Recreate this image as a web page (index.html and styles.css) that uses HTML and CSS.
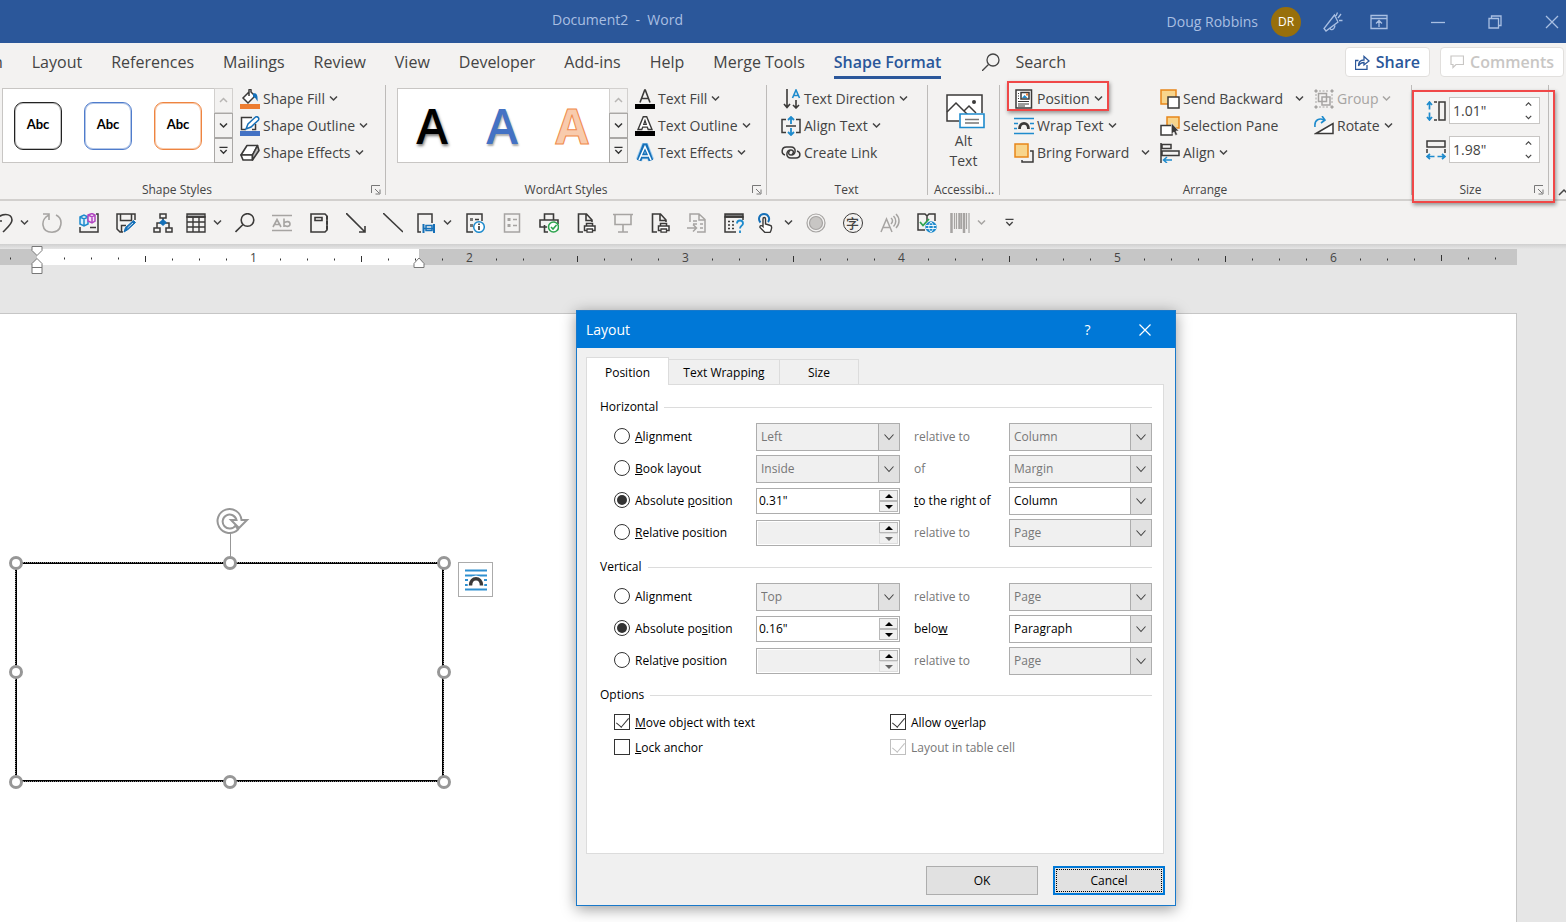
FILE: index.html
```html
<!DOCTYPE html>
<html lang="en">
<head>
<meta charset="utf-8">
<meta name="viewport" content="width=device-width, initial-scale=1">
<title>Document2 - Word</title>
<link rel="stylesheet" href="styles.css">
</head>
<body>
<svg class="sprite" aria-hidden="true">
  <symbol id="chev" viewBox="0 0 9 9"><path d="M1 2.500 4.500 6 8 2.500" fill="none" stroke="currentColor" stroke-width="1.500"/></symbol>
  <symbol id="chev-up" viewBox="0 0 9 9"><path d="M1 6 4.500 2.500 8 6" fill="none" stroke="currentColor" stroke-width="1.500"/></symbol>
  <symbol id="chev-thin" viewBox="0 0 10 10"><path d="M.5 2.500 5 7.500 9.500 2.500" fill="none" stroke="currentColor" stroke-width="1.100"/></symbol>
  <symbol id="chev-bar" viewBox="0 0 10 10"><path d="M.5 1.500h9M1.500 4.500 5 8l3.500-3.500" fill="none" stroke="currentColor" stroke-width="1.500"/></symbol>
  <symbol id="launch" viewBox="0 0 10 10"><path d="M.5 8V.500H9M4 4l4 4M9 4.500V9H4.500" fill="none" stroke="#777"/></symbol>
  <symbol id="ticks" viewBox="0 0 216 16"><path d="M.5 6v6M27.500 8.500v2M54.500 8.500v2M81.500 8.500v2M135.500 8.500v2M162.500 8.500v2M189.500 8.500v2" stroke="#333" fill="none"/></symbol>
  <symbol id="printer" viewBox="0 0 20 20"><path d="M16 9V7L10.500 1H2.500v18H7M10 1v6.500h6" fill="none" stroke="#3b3a39" stroke-width="1.600"/><path d="M10.500 13v-2.500h6V13M8.500 17.500V13h10.500v4.500z" fill="#fff" stroke="#3b3a39" stroke-width="1.500"/><path d="M11 16h5.500v3.200H11z" fill="#fff" stroke="#3b3a39" stroke-width="1.300"/></symbol>
</svg>

<header class="titlebar">
  <h1 class="doc-title">Document2 &nbsp;-&nbsp; Word</h1>
  <div class="account">
    <span class="user">Doug Robbins</span>
    <span class="avatar">DR</span>
  </div>
  <div class="window-tools">
    <button class="win-btn" aria-label="Announcements"><svg width="20" height="20" viewBox="0 0 20 20" fill="none" stroke="currentColor" stroke-width="1.300"><path d="M11.500 3 1 16.500l2 2.500L15 10zM7 15.500c0 3 4 3.500 5-2M11.500 3 15 10M13 4l1.500-3.500M15 6l3-4M16 8.500h3.500"/></svg></button>
    <button class="win-btn" aria-label="Ribbon display"><svg width="18" height="16" viewBox="0 0 18 16" fill="none" stroke="currentColor" stroke-width="1.300"><path d="M1 1.500h16v13H1zM1 4.500h16M9 13V7M6 9.500l3-3 3 3"/></svg></button>
    <button class="win-btn" aria-label="Minimize"><svg width="14" height="14" viewBox="0 0 14 14" stroke="currentColor" stroke-width="1.300"><path d="M0 7.500h14"/></svg></button>
    <button class="win-btn" aria-label="Restore"><svg width="14" height="14" viewBox="0 0 14 14" fill="none" stroke="currentColor" stroke-width="1.300"><path d="M1 3.500h9.500V13H1zM3.500 3.500V1H13v9.500h-2.500"/></svg></button>
    <button class="win-btn" aria-label="Close"><svg width="14" height="14" viewBox="0 0 14 14" stroke="currentColor" stroke-width="1.300"><path d="m1 1 12 12M13 1 1 13"/></svg></button>
  </div>
</header>

<div class="tabs-row">
  <nav class="tabs" aria-label="Ribbon tabs">
    <a href="#">Design</a><a href="#">Layout</a><a href="#">References</a><a href="#">Mailings</a><a href="#">Review</a><a href="#">View</a><a href="#">Developer</a><a href="#">Add-ins</a><a href="#">Help</a><a href="#">Merge Tools</a><a href="#" class="current" aria-current="page">Shape Format</a>
  </nav>
  <button class="search"><svg width="18" height="18" viewBox="0 0 18 18" fill="none" stroke="#444" stroke-width="1.300"><circle cx="11" cy="7" r="6"/><path d="M6.500 11.500 0 18"/></svg>Search</button>
  <div class="share-tools">
    <button class="pill share"><svg width="15" height="15" viewBox="0 0 15 15" fill="none" stroke="currentColor" stroke-width="1.300"><path d="M3.500 5.500h-3v9h11.500V10M3.500 11c0-4 2-6 5.500-6V1.500L14 6 9 10V7.500c-2.500 0-4 .5-5.500 3.500z"/></svg>Share</button>
    <button class="pill comments"><svg width="14" height="14" viewBox="0 0 14 14" fill="none" stroke="currentColor" stroke-width="1.200"><path d="M1 1h12.500v8.500H6L3 12.500v-3H1z"/></svg>Comments</button>
  </div>
</div>

<main class="ribbon">
  <section class="group shape-styles">
    <div class="group-body">
      <div class="gallery">
        <div class="gallery-items">
          <button class="swatch black">Abc</button><button class="swatch blue">Abc</button><button class="swatch orange">Abc</button>
        </div>
        <div class="gallery-nav">
          <button disabled aria-label="Previous"><svg class="chev"><use href="#chev-up"/></svg></button>
          <button aria-label="Next"><svg class="chev"><use href="#chev"/></svg></button>
          <button aria-label="More"><svg class="chev"><use href="#chev-bar"/></svg></button>
        </div>
      </div>
      <div class="commands">
        <button class="cmd"><svg class="ico" viewBox="0 0 20 20"><path d="M0 15h20v5H0z" fill="#ed7d31"/><path d="m9 3-6 6 5 5 7-7-4-4V1c0-1-2-1-2 0v6" fill="#fff" stroke="#3b3a39" stroke-width="1.500"/><path d="M13 4.500c4-1 5 2 4.500 8-1-1-1-4-4.500-4.500z" fill="#1570b8"/></svg>Shape Fill<svg class="chev"><use href="#chev"/></svg></button>
        <button class="cmd"><svg class="ico" viewBox="0 0 20 20"><path d="M0 15h20v5H0z" fill="#4472c4"/><path d="M12 1.500H1.500v12H6M15.500 8v5.500H12" fill="#fff" stroke="#3b3a39" stroke-width="1.500"/><path d="m6 13 2-5 7.500-7c2-1 4 1 3 3L11 11z" fill="#fff" stroke="#1570b8" stroke-width="1.500"/></svg>Shape Outline<svg class="chev"><use href="#chev"/></svg></button>
        <button class="cmd"><svg class="ico" viewBox="0 0 20 20" stroke="#3b3a39" stroke-width="1.600" stroke-linejoin="round"><path d="M7 2.500h10.500L12.500 12H1z" fill="#fff"/><path d="M1 12h11.500v5H3z" fill="#fff"/><path d="m17.500 2.500 1.500 5-6.500 9.500v-5z" fill="#bbb"/></svg>Shape Effects<svg class="chev"><use href="#chev"/></svg></button>
      </div>
    </div>
    <footer class="group-label">Shape Styles<button class="launcher" aria-label="Format shape"><svg width="10" height="10"><use href="#launch"/></svg></button></footer>
  </section>

  <section class="group wordart">
    <div class="group-body">
      <div class="gallery">
        <div class="gallery-items">
          <button class="letter l-black">A</button><button class="letter l-blue">A</button><button class="letter l-orange">A</button>
        </div>
        <div class="gallery-nav">
          <button disabled aria-label="Previous"><svg class="chev"><use href="#chev-up"/></svg></button>
          <button aria-label="Next"><svg class="chev"><use href="#chev"/></svg></button>
          <button aria-label="More"><svg class="chev"><use href="#chev-bar"/></svg></button>
        </div>
      </div>
      <div class="commands">
        <button class="cmd"><svg class="ico" viewBox="0 0 20 20"><path d="M0 15h20v5H0z" fill="#000"/><path d="M5 13.500 9.700 1h.6L15 13.500M6.700 9.500h6.600" fill="none" stroke="#3b3a39" stroke-width="1.600"/></svg>Text Fill<svg class="chev"><use href="#chev"/></svg></button>
        <button class="cmd"><svg class="ico" viewBox="0 0 20 20"><path d="M0 15h20v5H0z" fill="#000"/><path d="M8.300.8h3.400L17 13.500h-3.800l-.9-2.400H7.700l-.9 2.400H3z" fill="#fff" stroke="#3b3a39" stroke-width="1.400"/><path d="m10 4.500 1.300 4H8.700z" fill="#f3f2f1" stroke="#3b3a39" stroke-width="1.200"/></svg>Text Outline<svg class="chev"><use href="#chev"/></svg></button>
        <button class="cmd"><svg class="ico" viewBox="0 0 20 20" fill="none"><path d="M4 17 9.500 3h1L16 17M6.500 13h7" stroke="#9fcdf0" stroke-width="6.500"/><path d="M4 17.500 9.500 3h1L16 17.500M6.500 13h7" stroke="#1570b8" stroke-width="4.800"/><path d="M4 17 10 3.500 16 17M6.500 13h7" stroke="#fff" stroke-width="1.500"/></svg>Text Effects<svg class="chev"><use href="#chev"/></svg></button>
      </div>
    </div>
    <footer class="group-label">WordArt Styles<button class="launcher" aria-label="Format text effects"><svg width="10" height="10"><use href="#launch"/></svg></button></footer>
  </section>

  <section class="group text-group">
    <div class="group-body">
      <div class="commands">
        <button class="cmd"><svg class="ico" viewBox="0 0 20 20" fill="none" stroke="#3b3a39" stroke-width="1.600"><path d="M6 0v18M3 15l3 3.500L9 15M15 11v8M12 16l3 3 3-3"/><path d="m11.500 9 3.500-8 3.500 8M12.500 6.500h5" stroke="#1e8bcd"/></svg>Text Direction<svg class="chev"><use href="#chev"/></svg></button>
        <button class="cmd"><svg class="ico" viewBox="0 0 20 20" fill="none" stroke="#3b3a39" stroke-width="1.500"><path d="M5 3.500H1v13h4M15 3.500h4v13h-4M5 10h10"/><path d="M10 1v7M7 4l3-3 3 3M10 12v7M7 16l3 3 3-3" stroke="#1e8bcd" stroke-width="1.800"/></svg>Align Text<svg class="chev"><use href="#chev"/></svg></button>
        <button class="cmd"><svg class="ico" viewBox="0 0 20 20" fill="none" stroke="#3b3a39" stroke-width="1.500"><path d="M4 12c-4-1-4-8 1.500-8H10c6 0 5 8 0 8-3 0-3-3-1-4.500"/><path d="M16 8c4 1 4 7-1 7h-5c-6 0-5-8 0-8 3 0 3 3.500 1 4.500"/></svg>Create Link</button>
      </div>
    </div>
    <footer class="group-label">Text</footer>
  </section>

  <section class="group access">
    <div class="group-body">
      <button class="big"><svg width="39" height="35" viewBox="0 0 39 35" fill="none" stroke="#3b3a39" stroke-width="1.500"><path d="M13 27H1V1h35v18" fill="#fff"/><path d="M1 18 10 9l12 12M18 17l5-5 7 7"/><circle cx="28" cy="8" r="2" fill="#3b3a39" stroke="none"/><path d="M14 20h24v13.500H14z" fill="#fff" stroke="#1e8bcd" stroke-width="1.600"/><path d="M19 25.500h14M19 29h14" stroke="#777"/></svg><span>Alt<br>Text</span></button>
    </div>
    <footer class="group-label">Accessibi...</footer>
  </section>

  <section class="group arrange">
    <div class="group-body">
      <div class="commands col-a">
        <button class="cmd marked"><svg class="ico" viewBox="0 0 20 20" fill="none" stroke="#3b3a39" stroke-width="1.500"><path d="M2 1h15.500v18H2z" fill="#fff"/><path d="M7 3.500h8v6.500H7z"/><path d="m8 9 2.500-3 3 3z" fill="#1e8bcd" stroke="none"/><path d="M12 4.500h2v2h-2z" fill="#ed7d31" stroke="none"/><path d="M4 4.500h1M4 7h1M4 9.500h1M4 12.500h11M4 15h11M4 17h7" stroke-width="1"/></svg>Position<svg class="chev"><use href="#chev"/></svg></button>
        <button class="cmd"><svg class="ico" viewBox="0 0 20 20" fill="none" stroke="#1e8bcd" stroke-width="1.600"><path d="M0 2.500h20M0 7.500h4M16 7.500h4M0 12.500h3M17 12.500h3M0 17.500h20"/><path d="M5.500 13c0-7.500 9-7.500 9 0" stroke="#3b3a39" stroke-width="2.800"/></svg>Wrap Text<svg class="chev"><use href="#chev"/></svg></button>
        <button class="cmd spread"><svg class="ico" viewBox="0 0 20 20" stroke-width="1.500"><path d="M8 17v2h11V8h-3" fill="none" stroke="#3b3a39"/><path d="M1 1h13v13H1z" fill="#f8d58c" stroke="#e8861a"/></svg>Bring Forward<svg class="chev"><use href="#chev"/></svg></button>
      </div>
      <div class="commands col-b">
        <button class="cmd spread"><svg class="ico" viewBox="0 0 20 20" stroke-width="1.500"><path d="M1 1h15v14H1z" fill="#f8d58c" stroke="#e8861a"/><path d="M8 8h11v11H8z" fill="#fff" stroke="#3b3a39"/></svg>Send Backward<svg class="chev"><use href="#chev"/></svg></button>
        <button class="cmd"><svg class="ico" viewBox="0 0 20 20" stroke-width="1.500"><path d="M7 1h12v11H7z" fill="#f8d58c" stroke="#e8861a"/><path d="M1 9.500h11V19H1z" fill="#fff" stroke="#3b3a39"/><path d="M11.500 7v11l2.500-2 1.500 3.500 2-1-1.500-3.500h3z" fill="#3b3a39" stroke="#f3f2f1" stroke-width=".6"/></svg>Selection Pane</button>
        <button class="cmd"><svg class="ico" viewBox="0 0 20 20" fill="none" stroke="#3b3a39" stroke-width="1.500"><path d="M1 0v20M2 1.500h9v4H2zM2 8h17v4.500H2z"/><path d="M12 17H4M7 14l-3.500 3L7 20" stroke="#1e8bcd"/></svg>Align<svg class="chev"><use href="#chev"/></svg></button>
      </div>
      <div class="commands col-c">
        <button class="cmd" disabled><svg class="ico" viewBox="0 0 20 20" fill="none" stroke="#a6a4a2" stroke-width="1.500"><path d="M4.500 4.500h8v8h-8zM8 8h8v8H8z"/><path d="M2 5v10M5 2h10M18 5v10M5 18h10" stroke-dasharray="2 1.500" stroke-width="1"/><path d="M1 1h2v2H1zM17 1h2v2h-2zM1 17h2v2H1zM17 17h2v2h-2z" fill="#a6a4a2" stroke-width="1"/></svg>Group<svg class="chev"><use href="#chev"/></svg></button>
        <button class="cmd"><svg class="ico" viewBox="0 0 20 20" fill="none" stroke="#3b3a39" stroke-width="1.500"><path d="M2 17.500 19 7.500v10z" fill="#fff"/><path d="M1 11C0 3 6 2 10 4M8 0l3 4-4 3" stroke="#1e8bcd" stroke-width="1.600"/></svg>Rotate<svg class="chev"><use href="#chev"/></svg></button>
      </div>
    </div>
    <footer class="group-label">Arrange</footer>
  </section>

  <section class="group size marked-size">
    <div class="group-body">
      <label class="dim"><svg class="ico" viewBox="0 0 20 20" fill="none" stroke="#3b3a39" stroke-width="1.500"><path d="M13 1h6v18h-6zM8 1h3M8 19h3"/><path d="M3.500 1.500v7M1 4l2.500-3L6 4M3.500 11.500v7M1 16l2.500 3L6 16" stroke="#1e8bcd" stroke-width="1.700"/></svg><span class="dim-box"><input type="text" value='1.01"' aria-label="Shape height"><span class="dim-arrows"><svg class="chev"><use href="#chev-up"/></svg><svg class="chev"><use href="#chev"/></svg></span></span></label>
      <label class="dim"><svg class="ico" viewBox="0 0 20 20" fill="none" stroke="#3b3a39" stroke-width="1.500"><path d="M1 1h18v6H1zM1 9v4M19 9v4"/><path d="M1.500 16.500h7M4 14l-3 2.500L4 19M11.500 16.500h7M16 14l3 2.500-3 2.500" stroke="#1e8bcd" stroke-width="1.700"/></svg><span class="dim-box"><input type="text" value='1.98"' aria-label="Shape width"><span class="dim-arrows"><svg class="chev"><use href="#chev-up"/></svg><svg class="chev"><use href="#chev"/></svg></span></span></label>
    </div>
    <footer class="group-label">Size<button class="launcher" aria-label="Size settings"><svg width="10" height="10"><use href="#launch"/></svg></button></footer>
  </section>
  <button class="collapse" aria-label="Collapse ribbon"><svg width="12" height="8" viewBox="0 0 12 8"><path d="m1 7 5-5 5 5" fill="none" stroke="#444" stroke-width="1.500"/></svg></button>
</main>

<div class="qat" role="toolbar" aria-label="Quick access">
  <button class="q split" aria-label="Undo"><svg class="ico" viewBox="0 0 20 20" fill="none" stroke="#3b3a39" stroke-width="1.600"><path d="M2 1v7h7M2 8c6-9 17-8 17-1 0 4-5 8-9 12"/></svg><svg class="chev"><use href="#chev"/></svg></button>
  <button class="q" aria-label="Redo"><svg class="ico" viewBox="0 0 20 20" fill="none" stroke="#a6a4a2" stroke-width="1.600"><path d="M1 1h6v6M7 2C-2 6-1 19 10 19.200 20 19 22 6 14 2"/></svg></button>
  <button class="q" aria-label="3D models"><svg class="ico" viewBox="0 0 20 20" fill="none" stroke="#3b3a39" stroke-width="1.500"><path d="M1 14v5h18V1h-2M11 14.500h6" /><path d="m1 4 4-2 4 2v7l-4 2-4-2zM1 4l4 2 4-2M5 6v7" fill="#dff0fb" stroke="#1e8bcd"/><path d="m9 2 4-1.500L16 2v6l-3 2-4-2zM9 2l4 2 3-2M13 4v6" fill="#f6e3f7" stroke="#b146c2"/></svg></button>
  <button class="q" aria-label="Save as"><svg class="ico" viewBox="0 0 20 20" fill="none" stroke="#3b3a39" stroke-width="1.500"><path d="M19 7V1H1v15l3 3h3M4.500 1v6.500h11V1M5.500 19v-6.500H10"/><path d="m8 19 1.500-4.500 8-7 2 2-7.500 7z" fill="#1570b8" stroke="#1570b8" stroke-width="1"/><path d="m11.500 15 5.500-5" stroke="#fff" stroke-width=".8"/></svg></button>
  <button class="q" aria-label="Organization chart"><svg class="ico" viewBox="0 0 20 20" fill="none" stroke="#3b3a39" stroke-width="1.500"><path d="M7 1h6v4H7zM1 15h6v4H1zM13 15h6v4h-6zM10 5v4M4 15v-5h12v5"/><path d="m10 6 4 3.500-4 3.500-4-3.500z" fill="#1570b8" stroke="none"/></svg></button>
  <button class="q split" aria-label="Table"><svg class="ico" viewBox="0 0 20 20" fill="none" stroke="#3b3a39" stroke-width="1.400"><path d="M1 1h18v3H1z" fill="#aaa"/><path d="M1 4h18v15H1zM1 9h18M1 14h18M7 4v15M13 4v15"/></svg><svg class="chev"><use href="#chev"/></svg></button>
  <button class="q" aria-label="Find"><svg class="ico" viewBox="0 0 20 20" fill="none" stroke="#3b3a39" stroke-width="1.600"><circle cx="12.500" cy="7" r="6.300"/><path d="M8 11.500.5 19"/></svg></button>
  <button class="q" aria-label="Strikethrough"><svg class="ico" viewBox="0 0 20 20" fill="none" stroke="#a6a4a2" stroke-width="1.600"><path d="M0 2.500h20M0 17.500h20M1 14l4-7.500 4 7.500M2.500 11.500h5M12 5.500V14M12 10c2-2 6-2 6 1s-4 3-6 1"/></svg></button>
  <button class="q" aria-label="Notebook"><svg class="ico" viewBox="0 0 20 20" fill="none" stroke="#3b3a39" stroke-width="1.600"><path d="M2 1h14l2 2v14l-2 2H2zM6 4.500h7v3H6z"/><path d="M18 3v14" stroke-width="2" stroke-dasharray="3.500 1.500"/></svg></button>
  <button class="q" aria-label="Arrow"><svg class="ico" viewBox="0 0 20 20" fill="none" stroke="#3b3a39" stroke-width="1.600"><path d="m0 0 19 19M19 13v6h-6"/></svg></button>
  <button class="q" aria-label="Line"><svg class="ico" viewBox="0 0 20 20" stroke="#3b3a39" stroke-width="1.600"><path d="m0 0 20 19"/></svg></button>
  <button class="q split" aria-label="Page width"><svg class="ico" viewBox="0 0 20 20" fill="none" stroke="#3b3a39" stroke-width="1.500"><path d="M5 19H2V1h14v9"/><path d="M7.500 11v9M18 11v9" stroke="#1570b8" stroke-width="2"/><path d="M8 15.500h10M10 12.500h6v5h-6z" stroke="#1570b8"/></svg><svg class="chev"><use href="#chev"/></svg></button>
  <button class="q" aria-label="Document info"><svg class="ico" viewBox="0 0 20 20" fill="none" stroke="#3b3a39" stroke-width="1.500"><path d="M8 19H2V1h15v7"/><path d="M5 5h3v3H5zM5 11h3v3H5z" fill="#777" stroke="none"/><path d="M10 6.500h4"/><circle cx="14" cy="14" r="5.300" fill="#fff" stroke="#1e8bcd"/><path d="M14 13v4M14 10.500V12" stroke-width="1.700"/></svg></button>
  <button class="q" aria-label="Properties" disabled><svg class="ico" viewBox="0 0 20 20" fill="none" stroke="#a6a4a2" stroke-width="1.500"><path d="M2.500 1h15v18h-15z"/><path d="M5.500 5h3v3h-3zM5.500 11h3v3h-3z" fill="#a6a4a2" stroke="none"/><path d="M11 6.500h4M11 12.500h4"/></svg></button>
  <button class="q" aria-label="Quick print"><svg class="ico" viewBox="0 0 20 20" fill="none" stroke="#3b3a39" stroke-width="1.600"><path d="M5.500 7V1h9v6M8 14H1V7h18v4M5.500 12v7H9M15 9.500h1"/><circle cx="14.500" cy="14" r="5" fill="#fff" stroke="#2ea44f"/><path d="m12 14 2 2 3.500-4" stroke="#2ea44f"/></svg></button>
  <button class="q" aria-label="Print document"><svg class="ico"><use href="#printer"/></svg></button>
  <button class="q" aria-label="Presentation" disabled><svg class="ico" viewBox="0 0 20 20" fill="none" stroke="#a6a4a2" stroke-width="1.600"><path d="M0 1.500h20M2 2v9.500h16V2M10 12v7M5 19h10"/></svg></button>
  <button class="q" aria-label="Print preview"><svg class="ico"><use href="#printer"/></svg></button>
  <button class="q" aria-label="Insert file" disabled><svg class="ico" viewBox="0 0 20 20" fill="none" stroke="#a6a4a2" stroke-width="1.500"><path d="M3 9V1h9l6 5.500V19h-8M12 1v6h6M6 8h4M6 11h4M13 11h3M13 15h3M0 15h9M6 11.500 9.500 15 6 18.500"/></svg></button>
  <button class="q" aria-label="Field help"><svg class="ico" viewBox="0 0 20 20" fill="none" stroke="#3b3a39" stroke-width="1.500"><path d="M1 1h18v3H1z" fill="#777"/><path d="M12 19H1V4h18v3M4 8.500h2M8 8.500h2M4 12h2M8 12h2M4 15.500h2M8 15.500h2"/><path d="M13 10.500c0-4 6-4 6 0 0 2-3 2.500-3 5M16 17.500V20" stroke="#1e8bcd" stroke-width="1.800"/></svg></button>
  <button class="q split" aria-label="Touch mode"><svg class="ico" viewBox="0 0 20 20" fill="none" stroke="#3b3a39" stroke-width="1.400"><path d="M3.500 9.500C.5 6 2.500 1 7 1c4.500 0 6.500 5 4 8" stroke="#1570b8" stroke-width="2"/><path d="M6 13.500V6c0-2 2.500-2 2.500 0v5l5 1.500c2 .5 1 4.500-.5 7H8l-5-5c-.5-2 1.500-2.500 3-1z" fill="#fff"/></svg><svg class="chev"><use href="#chev"/></svg></button>
  <button class="q" aria-label="Record" disabled><svg class="ico" viewBox="0 0 20 20" fill="none" stroke="#a6a4a2" stroke-width="1.200"><circle cx="10" cy="10" r="9"/><circle cx="10" cy="10" r="6.500" fill="#c8c6c4"/></svg></button>
  <button class="q" aria-label="Enclose characters"><span class="enclosed">字</span></button>
  <button class="q" aria-label="Read aloud" disabled><svg class="ico" viewBox="0 0 20 20" fill="none" stroke="#a6a4a2" stroke-width="1.500"><path d="M1 19 6.500 6 12 19M3 14.500h7M11 5c2 1.500 2 4 0 6M13.500 3c3 3 3 7.500 0 10.500M16 1c4 4 4 10 0 14"/></svg></button>
  <button class="q" aria-label="Proofing language"><svg class="ico" viewBox="0 0 20 20" fill="none" stroke="#3b3a39" stroke-width="1.500"><path d="M8 17H1V1h7l2 2 2-2h6v7M10 3v5"/><path d="m3 9 3 3.500L12 6" stroke="#2ea44f" stroke-width="1.800"/><circle cx="14" cy="14" r="5.700" fill="#1e8bcd" stroke="none"/><path d="M9 12.500h10M9 15.500h10M14 9c-3 3-3 7 0 10 3-3 3-7 0-10" stroke="#fff" stroke-width=".9"/></svg></button>
  <button class="q split" aria-label="Barcode" disabled><svg class="ico" viewBox="0 0 20 20" stroke="#a6a4a2"><path d="M1.500 0v20M9.500 0v16M14 0v20" stroke-width="2.500"/><path d="M4.500 0v16M6.500 0v16M11.500 0v16M16.500 0v16M19 0v20" stroke-width="1.200"/></svg><svg class="chev"><use href="#chev"/></svg></button>
  <button class="q" aria-label="Customize toolbar"><svg class="chev"><use href="#chev-bar"/></svg></button>
</div>

<div class="workspace">
  <div class="ruler">
    <div class="ruler-scale">
      <div class="inch first"><svg><use href="#ticks"/></svg></div>
      <div class="inch"><svg><use href="#ticks"/></svg><span>1</span></div>
      <div class="inch"><svg><use href="#ticks"/></svg><span>2</span></div>
      <div class="inch"><svg><use href="#ticks"/></svg><span>3</span></div>
      <div class="inch"><svg><use href="#ticks"/></svg><span>4</span></div>
      <div class="inch"><svg><use href="#ticks"/></svg><span>5</span></div>
      <div class="inch"><svg><use href="#ticks"/></svg><span>6</span></div>
      <div class="inch"><svg><use href="#ticks"/></svg></div>
    </div>
    <svg class="indent-left" width="12" height="28" viewBox="0 0 12 28" fill="#fff" stroke="#777"><path d="M1 .5h10v4L6 9.500 1 4.500zM1 27.500v-10L6 12.500l5 5v10zM1 21.500h10"/></svg>
    <svg class="indent-right" width="12" height="11" viewBox="0 0 12 11" fill="#fff" stroke="#777"><path d="M1 10.500v-4L6 1l5 5.500v4z"/></svg>
  </div>
  <div class="page">
    <div class="shape">
      <svg class="rotator" width="34" height="58" viewBox="0 0 34 58" fill="none" stroke="#979797"><path d="M14.500 26v30" stroke-width="1"/><path d="M22 22.500A12 12 0 1 1 25.500 13H31l-8 8-8-8h5.500a7 7 0 1 0-1 5.500z" fill="#fff" stroke-width="2"/></svg>
      <i class="handle h-tl"></i><i class="handle h-tc"></i><i class="handle h-tr"></i>
      <i class="handle h-ml"></i><i class="handle h-mr"></i>
      <i class="handle h-bl"></i><i class="handle h-bc"></i><i class="handle h-br"></i>
      <button class="layout-options" aria-label="Layout options"><svg width="22" height="22" viewBox="0 0 22 22" fill="none" stroke="#2e8fd0" stroke-width="1.800"><path d="M0 1.500h22M0 6.500h22M0 11h3M19 11h3M0 16h3M19 16h3M0 20.500h22"/><path d="M5.500 16.500c0-9.500 11-9.500 11 0" stroke="#fff" stroke-width="6"/><path d="M5.500 16.500c0-9 11-9 11 0" stroke="#3b3a39" stroke-width="3.500"/></svg></button>
    </div>
  </div>
</div>

<div class="dialog" role="dialog" aria-labelledby="dlg-title">
  <header class="dialog-title">
    <h2 id="dlg-title">Layout</h2>
    <button class="dlg-btn" aria-label="Help">?</button>
    <button class="dlg-btn" aria-label="Close"><svg width="12" height="12" viewBox="0 0 12 12" stroke="#fff" stroke-width="1.200"><path d="m.5.5 11 11M11.500.5l-11 11"/></svg></button>
  </header>
  <div class="dialog-body">
    <div class="dlg-tabs" role="tablist">
      <button role="tab" aria-selected="true" class="active">Position</button><button role="tab">Text Wrapping</button><button role="tab">Size</button>
    </div>
    <div class="panel">
      <h3 class="legend">Horizontal</h3>
      <div class="fields">
        <label class="opt"><input type="radio" name="h"><span><u>A</u>lignment</span></label>
        <span class="combo"><select disabled aria-label="Horizontal alignment"><option>Left</option></select><svg class="drop"><use href="#chev-thin"/></svg></span>
        <label class="mid off" for="h1">relative to</label>
        <span class="combo"><select id="h1" disabled><option>Column</option></select><svg class="drop"><use href="#chev-thin"/></svg></span>

        <label class="opt"><input type="radio" name="h"><span><u>B</u>ook layout</span></label>
        <span class="combo"><select disabled aria-label="Book layout"><option>Inside</option></select><svg class="drop"><use href="#chev-thin"/></svg></span>
        <label class="mid off" for="h2">of</label>
        <span class="combo"><select id="h2" disabled><option>Margin</option></select><svg class="drop"><use href="#chev-thin"/></svg></span>

        <label class="opt"><input type="radio" name="h" checked><span>Absolute <u>p</u>osition</span></label>
        <span class="spin"><input type="text" value='0.31"' aria-label="Horizontal absolute position"><span class="spin-btns"><button class="up" aria-label="Increase"></button><button class="down" aria-label="Decrease"></button></span></span>
        <label class="mid" for="h3"><u>t</u>o the right of</label>
        <span class="combo"><select id="h3"><option>Column</option></select><svg class="drop"><use href="#chev-thin"/></svg></span>

        <label class="opt"><input type="radio" name="h"><span><u>R</u>elative position</span></label>
        <span class="spin"><input type="text" disabled aria-label="Horizontal relative position"><span class="spin-btns"><button class="up" aria-label="Increase"></button><button class="down" disabled aria-label="Decrease"></button></span></span>
        <label class="mid off" for="h4">relative to</label>
        <span class="combo"><select id="h4" disabled><option>Page</option></select><svg class="drop"><use href="#chev-thin"/></svg></span>
      </div>
      <h3 class="legend">Vertical</h3>
      <div class="fields">
        <label class="opt"><input type="radio" name="v"><span>Ali<u>g</u>nment</span></label>
        <span class="combo"><select disabled aria-label="Vertical alignment"><option>Top</option></select><svg class="drop"><use href="#chev-thin"/></svg></span>
        <label class="mid off" for="v1">relative to</label>
        <span class="combo"><select id="v1" disabled><option>Page</option></select><svg class="drop"><use href="#chev-thin"/></svg></span>

        <label class="opt"><input type="radio" name="v" checked><span>Absolute po<u>s</u>ition</span></label>
        <span class="spin"><input type="text" value='0.16"' aria-label="Vertical absolute position"><span class="spin-btns"><button class="up" aria-label="Increase"></button><button class="down" aria-label="Decrease"></button></span></span>
        <label class="mid" for="v2">belo<u>w</u></label>
        <span class="combo"><select id="v2"><option>Paragraph</option></select><svg class="drop"><use href="#chev-thin"/></svg></span>

        <label class="opt"><input type="radio" name="v"><span>Relat<u>i</u>ve position</span></label>
        <span class="spin"><input type="text" disabled aria-label="Vertical relative position"><span class="spin-btns"><button class="up" aria-label="Increase"></button><button class="down" disabled aria-label="Decrease"></button></span></span>
        <label class="mid off" for="v3">relative to</label>
        <span class="combo"><select id="v3" disabled><option>Page</option></select><svg class="drop"><use href="#chev-thin"/></svg></span>
      </div>
      <h3 class="legend">Options</h3>
      <div class="checks">
        <label class="opt"><input type="checkbox" checked><span><u>M</u>ove object with text</span></label>
        <label class="opt"><input type="checkbox" checked><span>Allow o<u>v</u>erlap</span></label>
        <label class="opt"><input type="checkbox"><span><u>L</u>ock anchor</span></label>
        <label class="opt off"><input type="checkbox" checked disabled><span>Layout in table cell</span></label>
      </div>
    </div>
    <div class="dlg-actions">
      <button class="action">OK</button><button class="action default">Cancel</button>
    </div>
  </div>
</div>
</body>
</html>
```
FILE: styles.css
```css
* { box-sizing: border-box; }

html, body { height: 100%; }

body {
  margin: 0;
  display: flex;
  flex-direction: column;
  position: relative;
  overflow: hidden;
  background: #e6e6e6;
  color: #444;
  font: 14px/20px "Open Sans", "Noto Sans", sans-serif;
}

button, input, select { font: inherit; color: inherit; }
button { border: 0; background: none; padding: 0; white-space: nowrap; }
h1, h2, h3 { margin: 0; font-weight: 400; }
svg { flex: none; display: block; }
.sprite { position: absolute; width: 0; height: 0; }
.chev { width: 9px; height: 9px; }
.ico { width: 20px; height: 20px; }

/* Title bar */
.titlebar {
  flex: none;
  display: grid;
  grid-template-columns: 1fr auto auto;
  align-items: center;
  height: 43px;
  overflow: hidden;
  background: #2b579a;
  color: #a9bfe2;
}
.doc-title { font-size: 14px; padding: 0 0 3px 552px; }
.account { display: flex; align-items: center; gap: 13px; }
.avatar {
  width: 30px;
  line-height: 30px;
  border-radius: 50%;
  background: #986f0b;
  color: #fff;
  font-size: 12px;
  text-align: center;
}
.window-tools { display: flex; align-items: center; gap: 16px; padding-left: 17px; margin-right: -6px; }
.win-btn { width: 41px; height: 43px; display: grid; place-items: center; }
.win-btn:nth-child(-n+2) { width: 30px; }
.win-btn:nth-child(2) { margin-right: 7px; }

/* Ribbon tabs */
.tabs-row {
  flex: none;
  display: flex;
  align-items: center;
  height: 42px;
  padding-bottom: 4px;
  background: #f3f2f1;
}
.tabs { display: flex; gap: 29px; margin-left: -48px; font-size: 16px; }
.tabs a { color: #444; text-decoration: none; line-height: 34px; white-space: nowrap; }
.tabs .current { color: #2b579a; font-weight: 600; box-shadow: inset 0 -3px #2b579a; }
.search { display: flex; align-items: center; gap: 15px; margin-left: 41px; font-size: 16px; }
.share-tools { display: flex; gap: 10px; margin-left: auto; padding-right: 2px; }
.pill {
  display: flex;
  align-items: center;
  gap: 6px;
  height: 30px;
  padding: 0 9px;
  border: 1px solid #e1dfdd;
  border-radius: 4px;
  background: #fff;
  font-size: 16px;
  font-weight: 600;
}
.share { color: #2b579a; }
.comments { color: #c8c6c4; }

/* Ribbon */
.ribbon {
  flex: none;
  display: flex;
  height: 116px;
  background: #f3f2f1;
  border-bottom: 2px solid #d2d0ce;
}
.group {
  position: relative;
  display: flex;
  flex-direction: column;
  justify-content: space-between;
}
.group::after {
  content: "";
  position: absolute;
  top: 0;
  right: 0;
  bottom: 4px;
  border-right: 1px solid #bdbbb9;
}
.group-body { display: flex; }
.group-label { position: relative; font-size: 12px; line-height: 18px; text-align: center; }
.launcher { position: absolute; right: 5px; top: 4px; }
.shape-styles { width: 386px; padding-left: 2px; }
.wordart { width: 381px; padding-left: 11px; }
.shape-styles .group-label, .wordart .group-label { padding-right: 34px; }
.wordart .group-label { padding-right: 32px; }
.text-group { width: 161px; padding-left: 14px; }
.text-group .group-label { padding-right: 16px; }
.access { width: 72px; }
.arrange { flex: 1; padding-left: 14px; }
.arrange .group-label { padding-right: 16px; }
.size { width: 137px; }
.size .group-label { padding-right: 20px; }

.commands { display: flex; flex-direction: column; align-items: flex-start; }
.gallery + .commands { margin-left: 7px; }
.cmd { position: relative; display: flex; align-items: center; gap: 3px; height: 27px; }
.cmd .chev, .q .chev { margin-left: 1px; }
.cmd:disabled { color: #a6a4a2; }
.spread { width: 100%; }
.spread .chev { margin-left: auto; }
.col-a { width: 136px; margin-right: 10px; }
.col-b { width: 144px; margin-right: 10px; }
.marked::before, .marked-size::before {
  content: "";
  position: absolute;
  z-index: 2;
  inset: -4px -6px 1px -7px;
  border: 2px solid #f04848;
  box-shadow: 1px 2px 4px #0006;
  pointer-events: none;
}
.marked-size::before { inset: 5px -6px -4px 0; }

.gallery { display: flex; height: 75px; margin-top: 3px; border: 1px solid #c8c6c4; background: #fff; }
.gallery-items { display: flex; gap: 22px; padding: 0 13px 0 11px; align-items: center; }
.wordart .gallery-items { padding: 0 14px 0 10px; }
.gallery-nav { display: grid; grid-template-rows: repeat(3, 1fr); width: 19px; margin: -1px; background: #f3f2f1; }
.gallery-nav button { display: grid; place-items: center; border: 1px solid #aaa8a6; color: #333; }
.gallery-nav button:disabled { border-color: #d2d0ce; color: #b8b6b4; }
.swatch {
  width: 48px;
  height: 48px;
  padding-bottom: 4px;
  border: 1px solid;
  border-radius: 9px;
  color: #000;
  font: 700 13px/16px Lato, sans-serif;
}
.black { border-color: #222; box-shadow: inset 0 0 0 1px #8888; }
.blue { border-color: #4f7ccc; box-shadow: inset 0 0 0 1px #4472c466; }
.orange { border-color: #ee8440; box-shadow: inset 0 0 0 1px #ed7d3166; }
.letter { width: 48px; font-size: 48px; font-weight: 600; line-height: 72px; }
.l-black { color: #000; text-shadow: 1px 2px 3px #0008; }
.l-blue { color: #4472c4; text-shadow: 1px 2px 2px #0005; }
.l-orange { color: #f8cbad; font-weight: 700; -webkit-text-stroke: 1px #f08a4b; }

.big { width: 71px; padding-top: 9px; display: flex; flex-direction: column; align-items: center; gap: 2px; }
.big svg { margin-left: 4px; }
.size .group-body { flex-direction: column; gap: 12px; padding: 12px 0 0 14px; }
.dim { display: flex; align-items: center; gap: 3px; }
.dim-box { display: flex; align-items: center; width: 91px; height: 27px; padding: 0 7px 0 3px; border: 1px solid #c8c6c4; background: #fff; }
.dim-box input { flex: 1; width: 0; padding: 0; border: 0; outline: 0; background: none; }
.dim-arrows { display: flex; flex-direction: column; gap: 6px; }
.dim-arrows .chev { width: 7px; height: 7px; }
.collapse { align-self: flex-end; padding: 0 0 3px 9px; width: 17px; overflow: hidden; }

/* Quick access toolbar */
.qat { flex: none; display: flex; height: 43px; background: #f3f2f1; }
.q { width: 37px; display: flex; align-items: center; justify-content: center; }
.split { width: 45px; gap: 6px; }
.split:first-child { margin-left: -12px; }
.q:disabled { color: #a6a4a2; }
.enclosed {
  width: 20px;
  height: 20px;
  border: 1px solid #3b3a39;
  border-radius: 50%;
  font: 500 13px/17px "Noto Sans CJK SC", sans-serif;
}

/* Ruler and page */
.workspace {
  flex: 1;
  min-height: 0;
  display: flex;
  flex-direction: column;
  padding-right: 49px;
  background: linear-gradient(#cfcfcf, #e6e6e6 5px);
}
.ruler { position: relative; flex: none; height: 69px; padding-top: 5px; }
.ruler-scale {
  display: flex;
  height: 16px;
  overflow: hidden;
  background: linear-gradient(to right, #c6c6c6 37px, #fff 37px 419px, #c6c6c6 419px);
}
.inch { position: relative; flex: none; width: 216px; display: grid; place-items: center; }
.inch svg { grid-area: 1 / 1; width: 216px; height: 16px; }
.inch span { grid-area: 1 / 1; font-size: 12px; line-height: 16px; padding: 1px 0 0 1px; }
.first { margin-left: -71px; }
.indent-left { position: absolute; left: 31px; top: 2px; }
.indent-right { position: absolute; left: 413px; top: 13px; }
.page { position: relative; flex: 1; border: solid #c6c6c6; border-width: 1px 1px 0 0; background: #fff; }

.shape {
  position: absolute;
  left: 15px;
  top: 248px;
  width: 429px;
  height: 220px;
  border: 2px solid #000;
  outline: 1px dotted #888;
  outline-offset: -1px;
}
.handle {
  position: absolute;
  width: 14px;
  height: 14px;
  margin: -7px;
  border: 3px solid #979797;
  border-radius: 50%;
  background: #fff;
}
.h-tl, .h-ml, .h-bl { left: -1px; }
.h-tc, .h-bc { left: 50%; }
.h-tr, .h-mr, .h-br { left: calc(100% + 2px); }
.h-tl, .h-tc, .h-tr { top: -1px; }
.h-ml, .h-mr { top: 50%; }
.h-bl, .h-bc, .h-br { top: calc(100% + 2px); }
.rotator { position: absolute; left: 199px; top: -57px; }
.layout-options {
  position: absolute;
  left: 441px;
  top: -2px;
  width: 35px;
  height: 35px;
  display: grid;
  place-items: center;
  border: 1px solid #ababab;
  background: #fff;
}

/* Layout dialog */
.dialog {
  position: absolute;
  left: 576px;
  top: 310px;
  width: 600px;
  border: 1px solid #1979ca;
  background: #f0f0f0;
  color: #000;
  font-size: 12px;
  line-height: 18px;
  box-shadow: 0 3px 14px #0006;
}
.dialog-title { display: flex; align-items: center; height: 37px; padding: 0 2px 0 9px; background: #0078d7; color: #fff; }
.dialog-title h2 { flex: 1; font-size: 14px; }
.dlg-btn { width: 57px; height: 37px; display: grid; place-items: center; font-size: 14px; }
.dialog-body { padding: 9px 10px 10px 9px; }
.dlg-tabs { display: flex; align-items: flex-end; height: 27px; }
.dlg-tabs button { height: 25px; width: 79px; padding-top: 2px; border: 1px solid #dcdcdc; border-width: 1px 1px 0 0; }
.dlg-tabs button:nth-child(2) { width: 111px; }
.dlg-tabs .active { position: relative; z-index: 1; height: 28px; width: 83px; margin-bottom: -1px; border-left-width: 1px; background: #fff; }
.panel { min-height: 470px; margin-right: 1px; padding: 13px 11px 0 13px; border: 1px solid #dcdcdc; background: #fff; }
.legend { display: flex; align-items: center; gap: 6px; font-size: 12px; line-height: 18px; }
.legend::after { content: ""; flex: 1; border-top: 1px solid #dcdcdc; }
.fields {
  display: grid;
  grid-template-columns: 142px 144px 1fr 143px;
  grid-auto-rows: 28px;
  row-gap: 4px;
  align-items: center;
  padding: 7px 0 11px 14px;
}
.opt { display: flex; align-items: center; gap: 5px; white-space: nowrap; }
.opt input {
  appearance: none;
  flex: none;
  display: grid;
  place-items: center;
  width: 16px;
  height: 16px;
  margin: 0 0 2px;
  border: 1px solid #333;
  background: #fff;
}
.opt input[type="radio"] { border-radius: 50%; }
.opt input[type="radio"]:checked::after { content: ""; width: 10px; height: 10px; border-radius: 50%; background: #333; }
.opt input[type="checkbox"]:checked::after {
  content: "";
  width: 6px;
  height: 11px;
  margin-bottom: 3px;
  border: solid #333;
  border-width: 0 1px 1px 0;
  rotate: 40deg;
}
.opt input:disabled, .opt input:disabled:checked::after { border-color: #bfbfbf; }
.off { color: #777; }
.mid { padding-left: 14px; }
.combo { position: relative; display: grid; height: 28px; }
.combo select { appearance: none; width: 100%; padding: 0 24px 0 4px; border: 1px solid #adadad; border-radius: 0; background: #fff; color: #000; opacity: 1; }
.combo select:disabled { background: #f0f0f0; color: #777; }
.drop { position: absolute; right: 0; top: 0; width: 22px; height: 28px; padding: 5px; border: 1px solid #adadad; background: #e1e1e1; color: #444; pointer-events: none; }
.spin { display: flex; height: 26px; padding: 1px; border: 1px solid #adadad; }
.spin input { flex: 1; width: 0; padding: 0 1px; border: 0; outline: 0; background: #fff; }
.spin input:disabled { background: #f0f0f0; }
.spin-btns { display: grid; grid-template-rows: 1fr 1fr; width: 19px; }
.spin-btns button { display: grid; place-items: center; border: 1px solid #b8b8b8; background: #f0f0f0; }
.spin-btns button::after { content: ""; border: 4px solid transparent; border-width: 0 4px 4px; border-bottom-color: #000; }
.spin-btns .down::after { border-width: 4px 4px 0; border-top-color: #000; }
.spin-btns .down:disabled { border-color: #ddd; }
.spin-btns .down:disabled::after { border-top-color: #666; }
.checks { display: grid; grid-template-columns: 276px 1fr; row-gap: 7px; padding: 10px 0 0 14px; }
.dlg-actions { display: flex; justify-content: flex-end; gap: 15px; padding-top: 12px; }
.action { width: 112px; height: 29px; border: 1px solid #adadad; background: #e1e1e1; }
.default { border: 2px solid #0078d7; outline: 1px dotted #000; outline-offset: -4px; }
```
